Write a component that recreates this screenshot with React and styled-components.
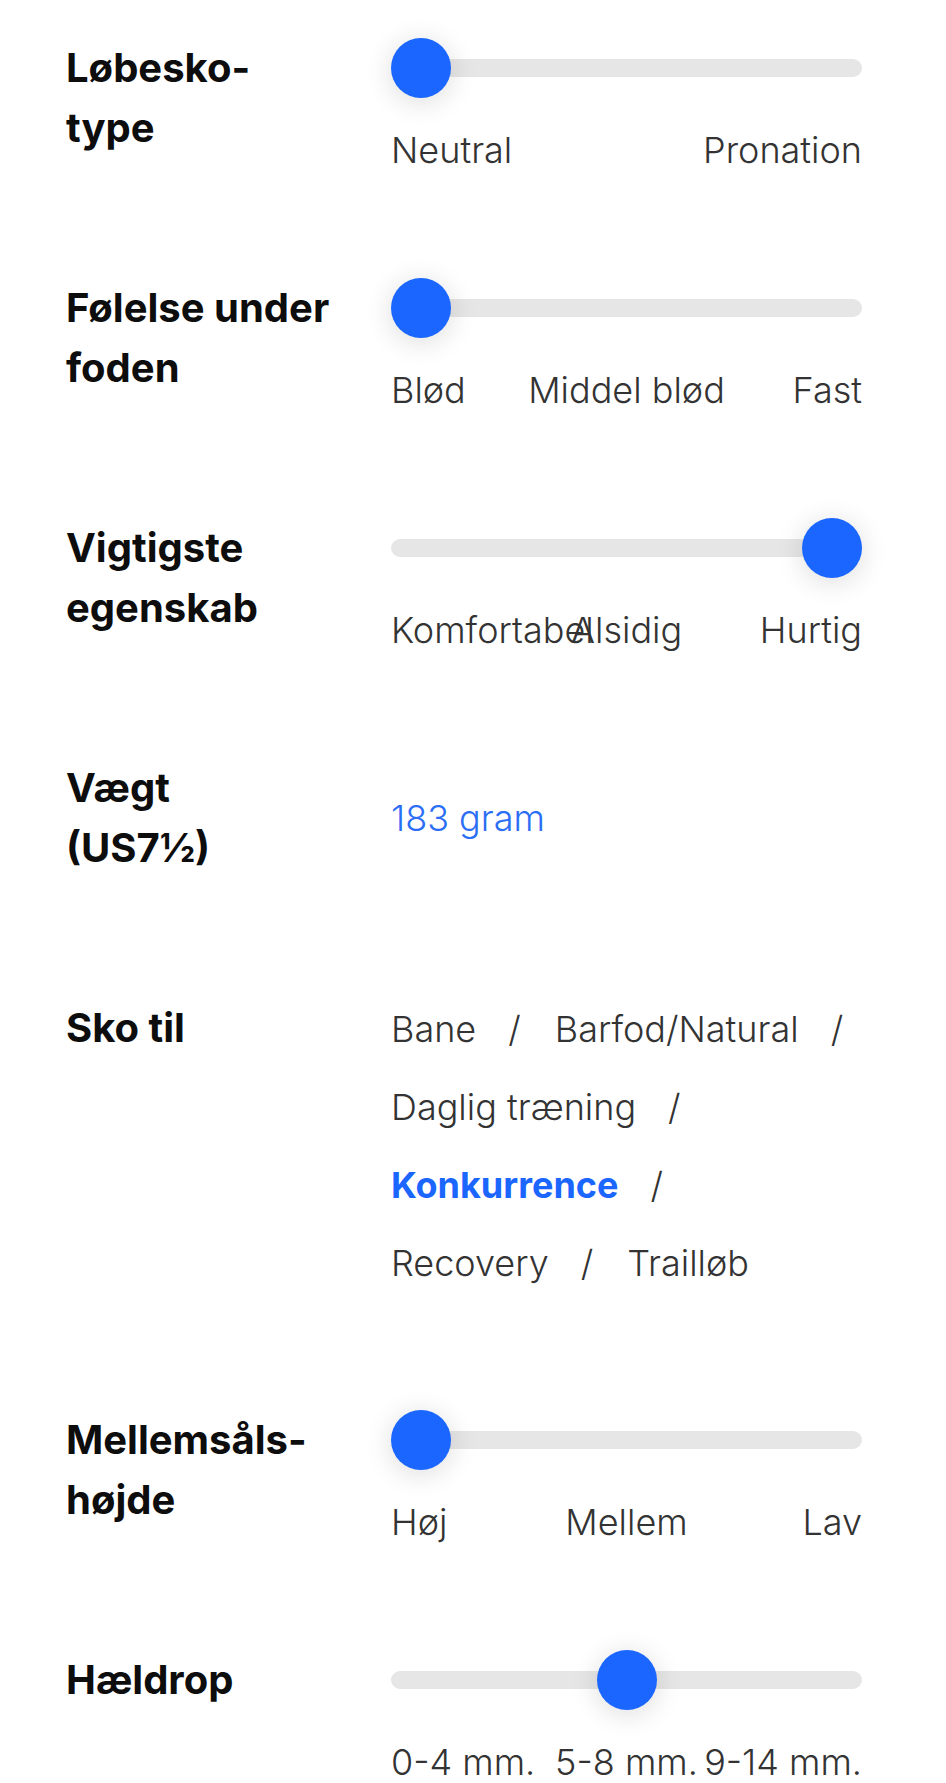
import React from "react";
import styled, { createGlobalStyle } from "styled-components";

const GlobalStyle = createGlobalStyle`
  body {
    margin: 0;
    background: #ffffff;
    font-family: Inter, "Noto Sans", "Liberation Sans", sans-serif;
  }
`;

const BLUE = "#1b66ff";

const Page = styled.div`
  padding: 38px 84px 0 66px;
`;

const Row = styled.div`
  display: grid;
  grid-template-columns: 325px 471px;
  align-items: start;
  padding-bottom: 120px;
`;

const Label = styled.div`
  font-size: 40px;
  line-height: 60px;
  font-weight: 700;
  color: #0d0d0d;
  white-space: nowrap;
`;

const Value = styled.div`
  align-self: ${(p) => (p.$center ? "center" : "start")};
`;

const Slider = styled.div`
  height: 120px;
`;

const TrackArea = styled.div`
  position: relative;
  height: 60px;
  display: flex;
  align-items: center;
`;

const Track = styled.div`
  width: 100%;
  height: 18px;
  border-radius: 9px;
  background: #e6e6e6;
`;

const Thumb = styled.div`
  position: absolute;
  top: 0;
  width: 60px;
  height: 60px;
  border-radius: 50%;
  background: ${BLUE};
  box-shadow: 0 4px 28px rgba(0, 0, 0, 0.14);
`;

const Marks = styled.div`
  display: grid;
  grid-template-columns: repeat(${(p) => p.$count}, minmax(0, 1fr));
  margin-top: 34px;
  font-size: 36px;
  line-height: 36px;
  font-weight: 300;
  color: #333333;
`;

const Mark = styled.div`
  display: flex;
  justify-content: ${(p) => p.$justify};
  white-space: nowrap;
  min-width: 0;
`;

const Weight = styled.div`
  font-size: 36px;
  line-height: 54px;
  font-weight: 300;
  color: #2b6ef5;
`;

const Tags = styled.div`
  display: flex;
  flex-wrap: wrap;
  column-gap: 34px;
  row-gap: 24px;
  margin-top: 4px;
  font-size: 36px;
  line-height: 54px;
  font-weight: 300;
  color: #333333;
`;

const Tag = styled.span`
  white-space: nowrap;
  font-weight: ${(p) => (p.$active ? 700 : 300)};
  color: ${(p) => (p.$active ? BLUE : "#333333")};
`;

const Sep = styled.span`
  margin-left: 32px;
  font-weight: 300;
  color: #333333;
`;

const rows = [
  { label: ["Løbesko-", "type"], value: 0, marks: ["Neutral", "Pronation"] },
  { label: ["Følelse under", "foden"], value: 0, marks: ["Blød", "Middel blød", "Fast"] },
  { label: ["Vigtigste", "egenskab"], value: 1, marks: ["Komfortabel", "Alsidig", "Hurtig"] },
  { label: ["Vægt", "(US7½)"], weight: "183 gram" },
  {
    label: ["Sko til"],
    tags: [
      { name: "Bane" },
      { name: "Barfod/Natural" },
      { name: "Daglig træning" },
      { name: "Konkurrence", active: true },
      { name: "Recovery" },
      { name: "Trailløb" },
    ],
  },
  { label: ["Mellemsåls-", "højde"], value: 0, marks: ["Høj", "Mellem", "Lav"] },
  { label: ["Hældrop"], value: 0.5, marks: ["0-4 mm.", "5-8 mm.", "9-14 mm."] },
];

const justifyFor = (i, n) => (i === 0 ? "flex-start" : i === n - 1 ? "flex-end" : "center");

const RangeSlider = ({ value, marks }) => (
  <Slider>
    <TrackArea>
      <Track />
      <Thumb style={{ left: `calc((100% - 60px) * ${value})` }} />
    </TrackArea>
    <Marks $count={marks.length}>
      {marks.map((m, i) => (
        <Mark key={m} $justify={justifyFor(i, marks.length)}>
          <span>{m}</span>
        </Mark>
      ))}
    </Marks>
  </Slider>
);

const App = () => {
  return (
    <Page>
      <GlobalStyle />
      {rows.map((row) => (
        <Row key={row.label.join(" ")}>
          <Label>
            {row.label.map((line) => (
              <div key={line}>{line}</div>
            ))}
          </Label>
          {row.marks && (
            <Value>
              <RangeSlider value={row.value} marks={row.marks} />
            </Value>
          )}
          {row.weight && (
            <Value $center>
              <Weight>{row.weight}</Weight>
            </Value>
          )}
          {row.tags && (
            <Value>
              <Tags>
                {row.tags.map((t, i) => (
                  <span key={t.name}>
                    <Tag $active={t.active}>{t.name}</Tag>
                    {i < row.tags.length - 1 && <Sep>/</Sep>}
                  </span>
                ))}
              </Tags>
            </Value>
          )}
        </Row>
      ))}
    </Page>
  );
};

export default App;
